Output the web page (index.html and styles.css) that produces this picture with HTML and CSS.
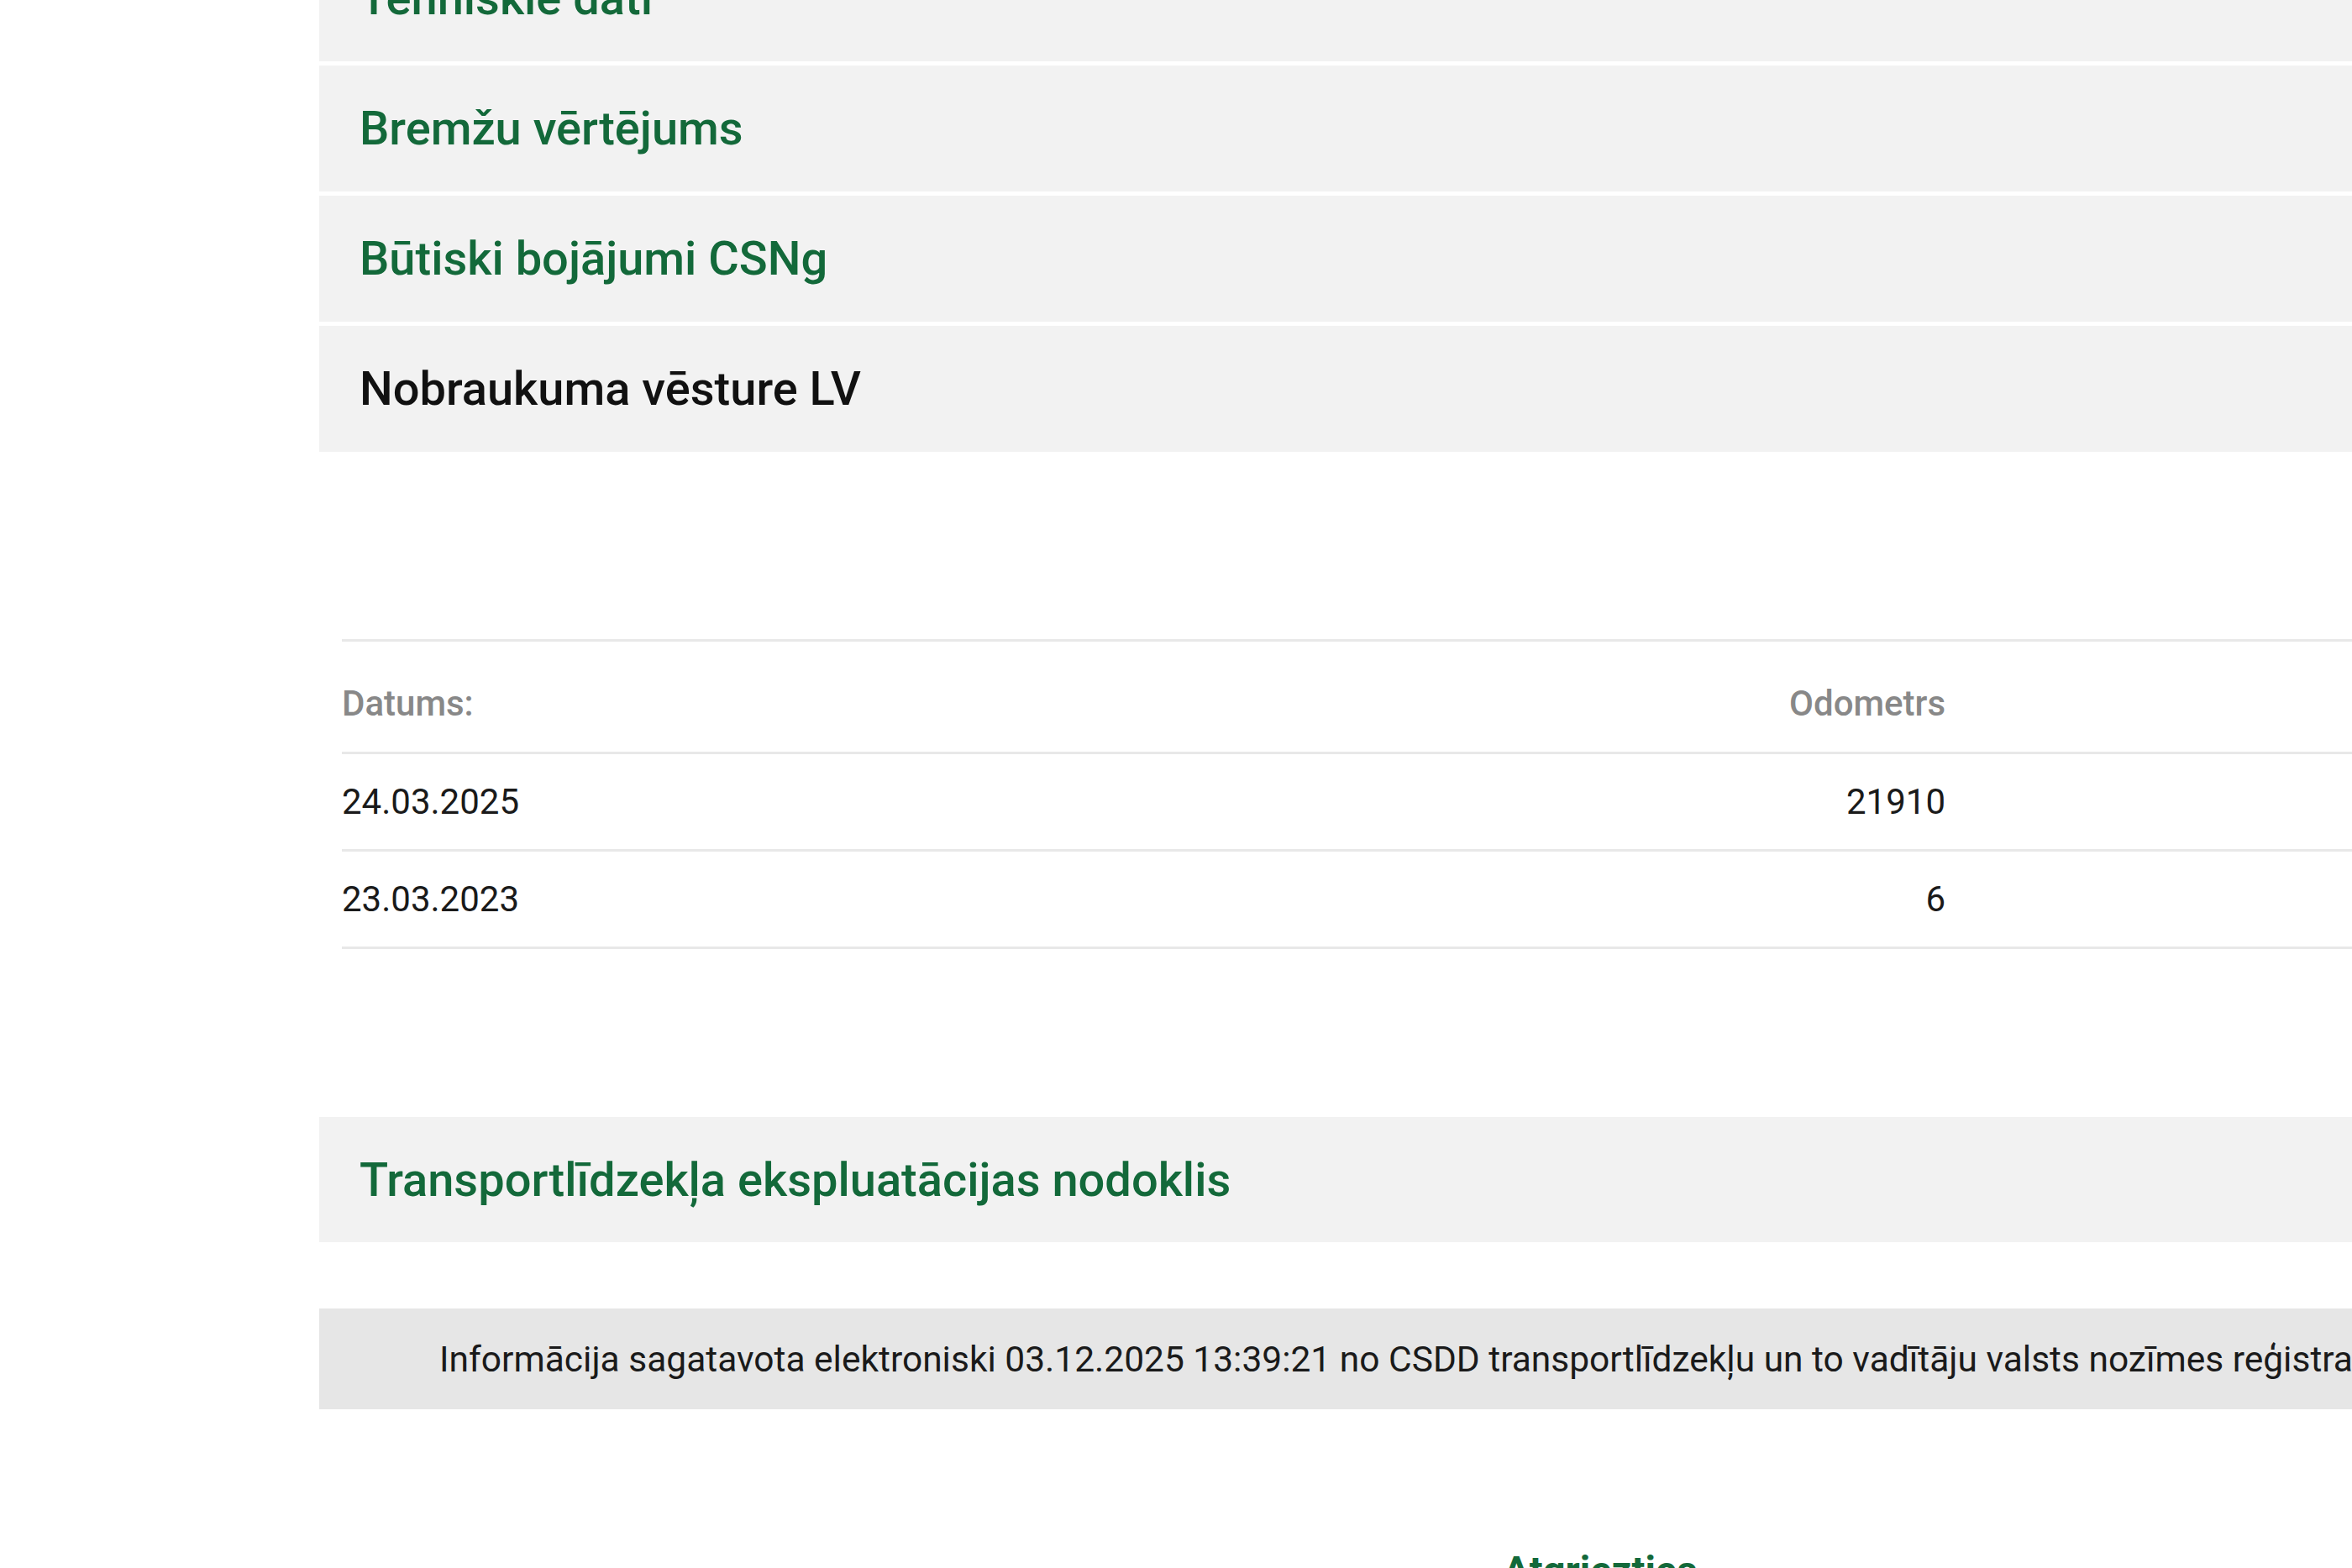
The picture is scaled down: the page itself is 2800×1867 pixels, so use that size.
FILE: index.html
```html
<!DOCTYPE html>
<html lang="lv">
<head>
  <meta charset="UTF-8">
  <title>Transportlīdzekļa dati</title>
  <link rel="stylesheet" href="styles.css">
</head>
<body>

<div class="content">
  <div class="panel">Tehniskie dati</div>
  <div class="panel">Bremžu vērtējums</div>
  <div class="panel">Būtiski bojājumi CSNg</div>
  <div class="panel active">Nobraukuma vēsture LV</div>

  <!-- nobraukuma tabula -->
  <div class="odo-table">
    <div class="row head">
      <div class="cell">Datums:</div>
      <div class="cell num">Odometrs</div>
      <div class="cell"></div>
    </div>
    <div class="row">
      <div class="cell">24.03.2025</div>
      <div class="cell num">21910</div>
      <div class="cell"></div>
    </div>
    <div class="row">
      <div class="cell">23.03.2023</div>
      <div class="cell num">6</div>
      <div class="cell"></div>
    </div>
  </div>

  <div class="panel tax">Transportlīdzekļa ekspluatācijas nodoklis</div>

  <div class="info">
    Informācija sagatavota elektroniski 03.12.2025 13:39:21 no CSDD transportlīdzekļu un to vadītāju valsts nozīmes reģistra datiem.
  </div>

  <div class="back">
    <a href="#">Atgriezties</a>
  </div>
</div>

</body>
</html>
```

FILE: styles.css
```css
body {
  margin: 0;
  font-family: Roboto, "Liberation Sans", Arial, sans-serif;
  background: #fff;
  overflow: hidden;
}
.content {
  width: 3050px;
  margin-left: 380px;
  margin-top: -77px;
}
.panel {
  display: flex;
  align-items: center;
  height: 150px;
  padding: 0 48px;
  margin-bottom: 5px;
  background: #f2f2f2;
  color: #13693a;
  font-size: 56px;
  font-weight: 500;
}
.panel.active {
  color: #111;
}
.odo-table {
  margin: 223px 0 0 27px;
  border-top: 3px solid #e8e8e8;
}
.row {
  display: grid;
  grid-template-columns: 1fr 700px 1114px;
  border-bottom: 3px solid #e8e8e8;
  font-size: 42px;
  line-height: 49px;
  color: #1a1a1a;
}
.cell {
  padding: 32px 0;
}
.cell.num {
  text-align: right;
}
.row.head {
  color: #888;
  font-weight: 500;
}
.row.head .cell {
  padding: 49px 0 33px;
}
.panel.tax {
  margin-top: 200px;
  height: 149px;
}
.info {
  margin-top: 79px;
  height: 120px;
  padding-left: 143px;
  display: flex;
  align-items: center;
  background: #e6e6e6;
  color: #1a1a1a;
  font-size: 42.5px;
  white-space: nowrap;
  overflow: hidden;
}
.back {
  margin-top: 164px;
  text-align: center;
  font-size: 47px;
  line-height: 55px;
}
.back a {
  color: #13693a;
  font-weight: 700;
  text-decoration: none;
}
```
